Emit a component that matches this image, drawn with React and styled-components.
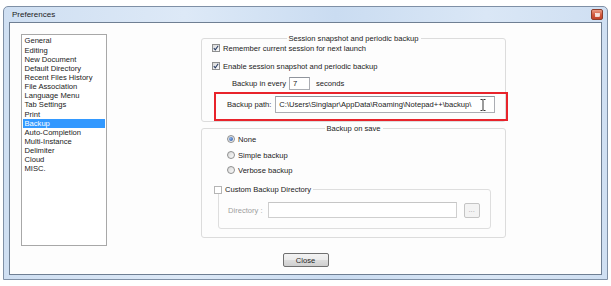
import React from 'react';
import styled, { createGlobalStyle } from 'styled-components';

const GlobalStyle = createGlobalStyle`
  html, body {
    margin: 0;
    padding: 0;
    background: #ffffff;
  }
  body {
    font-family: "Liberation Sans", Arial, sans-serif;
    font-size: 7.6px;
    color: #222;
  }
`;

const Window = styled.div`
  box-sizing: border-box;
  margin: 6px 0 0 3px;
  width: 605px;
  height: 274px;
  border: 1px solid #7f90a6;
  border-radius: 5px 5px 0 0;
  background: linear-gradient(to right, #cfdff2 0%, #dde9f7 30%, #cadcf1 55%, #dae7f6 80%, #cfdff2 100%);
  padding: 0 5px 4px 5px;
  display: flex;
  flex-direction: column;
`;

const TitleBar = styled.div`
  height: 15px;
  display: flex;
  align-items: center;
  justify-content: space-between;
  padding-left: 3px;
  font-size: 8px;
  color: #1b1b1b;
`;

const CloseX = styled.div`
  box-sizing: border-box;
  width: 12px;
  height: 11px;
  margin-right: -1px;
  border: 1px solid #8d3d2c;
  border-radius: 2px;
  background: linear-gradient(#eb9c86, #d0553a 55%, #c2432a);
  display: flex;
  align-items: center;
  justify-content: center;
`;

const Client = styled.div`
  flex: 1;
  border: 1px solid #6f7f93;
  background: #fdfdfd;
  display: flex;
  flex-direction: column;
`;

const Body = styled.div`
  display: flex;
  align-items: flex-start;
  padding: 11px 0 0 11px;
`;

const ListBox = styled.div`
  box-sizing: border-box;
  width: 86px;
  height: 212px;
  border: 1px solid #a8a8a8;
  background: #fff;
  padding-top: 1.4px;
`;

const ListItem = styled.div`
  height: 9.15px;
  line-height: 9.15px;
  margin: 0 1px;
  padding-left: 1.5px;
  white-space: nowrap;
  background: ${(p) => (p.$selected ? '#3399ff' : 'transparent')};
  color: ${(p) => (p.$selected ? '#fff' : '#222')};
`;

const Panel = styled.div`
  margin: 4px 0 0 94px;
  width: 305px;
  display: flex;
  flex-direction: column;
`;

const Group = styled.div`
  position: relative;
  box-sizing: border-box;
  height: ${(p) => p.$h}px;
  margin-top: ${(p) => p.$mt || 0}px;
  border: 1px solid #dcdcdc;
  border-radius: 3px;
  display: flex;
  flex-direction: column;
`;

const Caption = styled.span`
  position: absolute;
  top: -5px;
  left: 50%;
  transform: translateX(-50%);
  padding: 0 2px;
  line-height: 9px;
  background: #fdfdfd;
  white-space: nowrap;
`;

const Row = styled.div`
  display: flex;
  align-items: center;
  height: ${(p) => p.$h || 9}px;
  margin-top: ${(p) => p.$mt || 0}px;
  padding-left: ${(p) => p.$pl || 0}px;
  gap: ${(p) => p.$gap ?? 3}px;
  position: relative;
  white-space: nowrap;
`;

const Box = styled.span`
  box-sizing: border-box;
  width: 8px;
  height: 8px;
  border: 1px solid ${(p) => (p.$disabled ? '#b5b5b5' : '#8e8f8f')};
  background: ${(p) => (p.$disabled ? '#fff' : 'linear-gradient(135deg, #d8d8d8, #fbfbfb)')};
  display: inline-flex;
  align-items: center;
  justify-content: center;
  flex: none;
`;

const Radio = styled(Box)`
  border-radius: 50%;
`;

const Dot = styled.span`
  width: 4px;
  height: 4px;
  border-radius: 50%;
  background: radial-gradient(circle at 35% 35%, #8fb4ea, #1f4f9e);
`;

const TextField = styled.div`
  box-sizing: border-box;
  width: ${(p) => p.$w}px;
  height: ${(p) => p.$h}px;
  border: 1px solid ${(p) => (p.$disabled ? '#cfcfcf' : '#abadb3')};
  border-top-color: ${(p) => (p.$disabled ? '#c6c6c6' : '#8f949c')};
  background: #fff;
  display: flex;
  align-items: center;
  padding-left: 3px;
  margin-left: ${(p) => p.$ml || 0}px;
  margin-right: ${(p) => p.$mr || 0}px;
  position: relative;
`;

const Highlight = styled.div`
  position: absolute;
  left: 12px;
  right: -3px;
  top: -4px;
  bottom: -8px;
  border: 2px solid #e8232b;
  pointer-events: none;
`;

const Cursor = styled.svg`
  position: absolute;
  right: 8px;
  top: 2px;
`;

const SubGroup = styled.div`
  position: relative;
  box-sizing: border-box;
  width: 273px;
  height: 40px;
  margin: 14.5px 0 0 16px;
  border: 1px solid #dedede;
  border-radius: 3px;
`;

const SubCaption = styled.div`
  position: absolute;
  top: -5px;
  left: -5px;
  display: flex;
  align-items: center;
  gap: 3px;
  padding-right: 2px;
  background: #fdfdfd;
  line-height: 9px;
`;

const Muted = styled.span`
  color: #9e9e9e;
`;

const BrowseButton = styled.div`
  box-sizing: border-box;
  width: 16px;
  height: 15px;
  margin-left: 7px;
  border: 1px solid #c4c4c4;
  border-radius: 2px;
  background: #f3f3f3;
  color: #a8a8a8;
  display: flex;
  align-items: center;
  justify-content: center;
  line-height: 1;
`;

const Footer = styled.div`
  display: flex;
  justify-content: center;
  margin-top: 7px;
`;

const Button = styled.div`
  box-sizing: border-box;
  width: 46px;
  height: 14px;
  border: 1px solid #707070;
  border-radius: 2px;
  background: linear-gradient(#f3f3f3 0%, #ebebeb 50%, #dddddd 51%, #cfcfcf 100%);
  display: flex;
  align-items: center;
  justify-content: center;
  color: #1e1e1e;
`;

const pages = [
  'General',
  'Editing',
  'New Document',
  'Default Directory',
  'Recent Files History',
  'File Association',
  'Language Menu',
  'Tab Settings',
  'Print',
  'Backup',
  'Auto-Completion',
  'Multi-Instance',
  'Delimiter',
  'Cloud',
  'MISC.',
];

function Check({ checked, disabled }) {
  return (
    <Box $disabled={disabled}>
      {checked && (
        <svg width="6" height="6" viewBox="0 0 6 6">
          <path d="M0.8 3.2 L2.3 4.8 L5.2 0.8" fill="none" stroke="#2b3f66" strokeWidth="1.1" />
        </svg>
      )}
    </Box>
  );
}

function Option({ selected, label, mt }) {
  return (
    <Row $mt={mt} $pl={25}>
      <Radio>{selected && <Dot />}</Radio>
      {label}
    </Row>
  );
}

export default function App() {
  return (
    <>
      <GlobalStyle />
      <Window>
        <TitleBar>
          <span>Preferences</span>
          <CloseX>
            <svg width="5" height="4" viewBox="0 0 5 4">
              <rect x="0.5" y="0.5" width="4" height="3" fill="#f6e2dc" stroke="#fff" strokeWidth="0.6" />
            </svg>
          </CloseX>
        </TitleBar>
        <Client>
          <Body>
            <ListBox>
              {pages.map((p) => (
                <ListItem key={p} $selected={p === 'Backup'}>
                  {p}
                </ListItem>
              ))}
            </ListBox>
            <Panel>
              <Group $h={84}>
                <Caption>Session snapshot and periodic backup</Caption>
                <Row $mt={4.5} $pl={10}>
                  <Check checked />
                  Remember current session for next launch
                </Row>
                <Row $mt={9} $pl={10}>
                  <Check checked />
                  Enable session snapshot and periodic backup
                </Row>
                <Row $mt={6.5} $pl={30} $h={13} $gap={0}>
                  Backup in every
                  <TextField $w={21} $h={13} $ml={3} $mr={6}>
                    7
                  </TextField>
                  seconds
                </Row>
                <Row $mt={6} $pl={25} $h={17} $gap={0}>
                  Backup path:
                  <TextField $w={220} $h={17} $ml={4}>
                    C:\Users\Singlapr\AppData\Roaming\Notepad++\backup\
                    <Cursor width="6" height="12" viewBox="0 0 6 12">
                      <path d="M0.5 0.5 H2.3 L3 1.2 L3.7 0.5 H5.5 M3 1.2 V10.8 M0.5 11.5 H2.3 L3 10.8 L3.7 11.5 H5.5" fill="none" stroke="#222" strokeWidth="0.9" />
                    </Cursor>
                  </TextField>
                  <Highlight />
                </Row>
              </Group>
              <Group $h={110} $mt={6}>
                <Caption>Backup on save</Caption>
                <Option selected label="None" mt={5.5} />
                <Option label="Simple backup" mt={7} />
                <Option label="Verbose backup" mt={6} />
                <SubGroup>
                  <SubCaption>
                    <Check disabled />
                    Custom Backup Directory
                  </SubCaption>
                  <Row $mt={12} $pl={9} $h={16} $gap={0}>
                    <Muted>Directory :</Muted>
                    <TextField $w={189} $h={16} $ml={5} $disabled />
                    <BrowseButton>...</BrowseButton>
                  </Row>
                </SubGroup>
              </Group>
            </Panel>
          </Body>
          <Footer>
            <Button>Close</Button>
          </Footer>
        </Client>
      </Window>
    </>
  );
}
